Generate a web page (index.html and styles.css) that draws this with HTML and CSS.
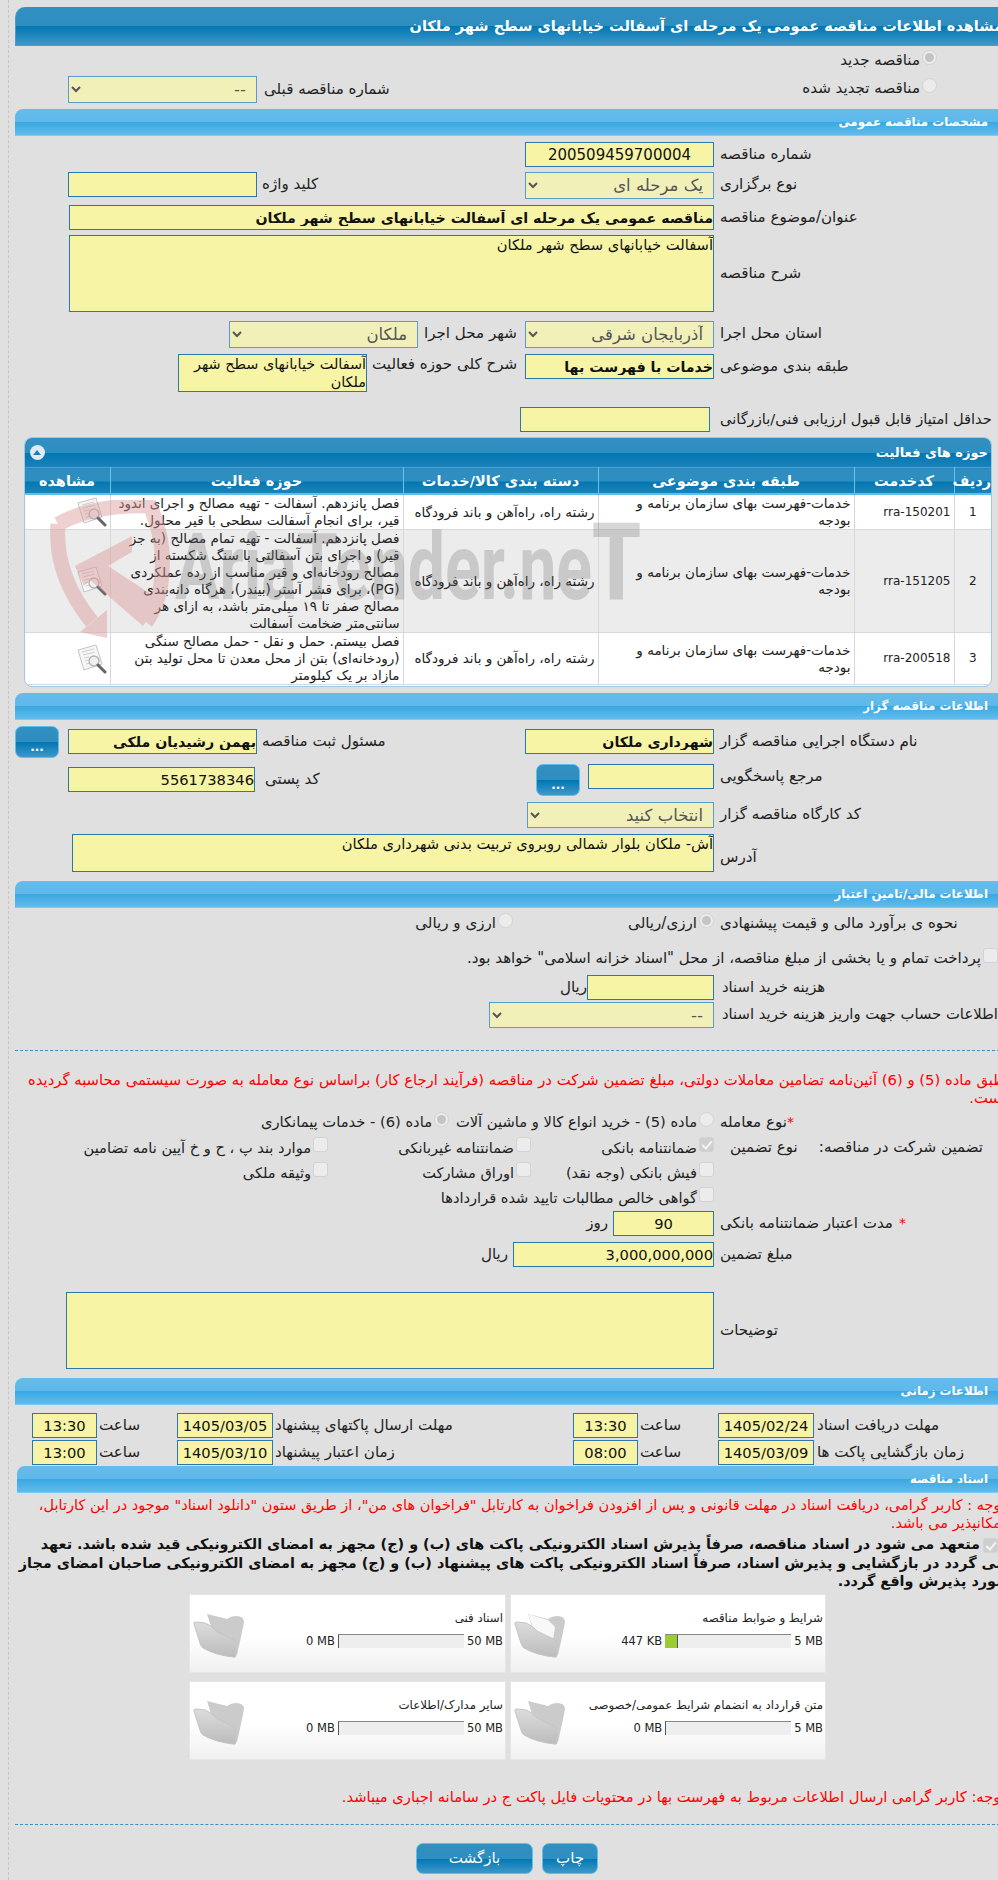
FILE: index.html
```html
<!DOCTYPE html>
<html lang="fa">
<head>
  <meta charset="UTF-8" />
  <title>مشاهده اطلاعات مناقصه</title>
  <link rel="stylesheet" href="styles.css">
</head>
<body>
<svg class="defs" width="0" height="0">
  <defs>
    <linearGradient id="folder-grad" x1="0" y1="0" x2="0" y2="1">
      <stop offset="0" stop-color="#dcdcdc"/>
      <stop offset="1" stop-color="#bcbcbc"/>
    </linearGradient>
  </defs>
  <symbol id="doc-icon" viewBox="0 0 32 30">
    <path d="M2 6 L20 1 L26 20 L8 26 Z" fill="#f6f6f6" stroke="#c4c4c4"/>
    <path d="M6 8 L18 5 M7 11 L19 8 M8 14 L13 13 M9 17 L12 16 M10 20 L15 19" stroke="#cdcdcd" fill="none"/>
    <circle cx="18" cy="17" r="5" fill="#efefef" stroke="#b4b4b4" stroke-width="1.4"/>
    <path d="M22 21 L29 28" stroke="#666" stroke-width="3" stroke-linecap="round"/>
  </symbol>
  <symbol id="folder-icon" viewBox="0 0 52 46">
    <path d="M14 1 L34 6 Q38 3 43 3 Q51 3 51 9 Q49 20 44 42 L20 20 Z" fill="#cbcbcb"/>
    <path d="M1 11 Q0 9 3 9 L12 10 Q18 12 23 18 Q32 23 40 26 Q43 27 43 30 L43 42 Q43 45 40 44 Q22 42 10 35 Q8 34 7 30 Z" fill="url(#folder-grad)" stroke="#c4c4c4"/>
  </symbol>
  <symbol id="folder-open-icon" viewBox="0 0 52 46">
    <path d="M14 1 L34 6 Q38 3 43 3 Q51 3 51 9 Q49 20 44 42 L20 20 Z" fill="#cbcbcb"/>
    <path d="M14 1 L34 7 L41 14 L39 27 L20 18 Z" fill="#f8f8f8"/>
    <path d="M1 11 Q0 9 3 9 L12 10 Q18 12 23 18 Q32 23 40 26 Q43 27 43 30 L43 42 Q43 45 40 44 Q22 42 10 35 Q8 34 7 30 Z" fill="url(#folder-grad)" stroke="#c4c4c4"/>
  </symbol>
</svg>

<div class="shell">
<div class="page">

  <h1 class="title">مشاهده اطلاعات مناقصه عمومی یک مرحله ای آسفالت خیابانهای سطح شهر ملکان</h1>

  <!-- new / renewed -->
  <div class="choice-first"><label class="opt"><input type="radio" class="on" disabled>مناقصه جدید</label></div>
  <div class="choice-second">
    <label class="opt"><input type="radio" disabled>مناقصه تجدید شده</label>
    <div class="prev-tender">
      <span class="lbl-inline">شماره مناقصه قبلی</span>
      <select class="sel w-189" disabled><option>--</option></select>
    </div>
  </div>

  <h2 class="bar">مشخصات مناقصه عمومی</h2>
  <div class="row r-142">
    <span class="lbl">شماره مناقصه</span>
    <input class="in w-189 center number" value="200509459700004" readonly>
  </div>
  <div class="row r-172">
    <span class="lbl">نوع برگزاری</span>
    <select class="sel w-189" disabled><option>یک مرحله ای</option></select>
    <span class="lbl-2">کلید واژه</span>
    <input class="in w-189" readonly>
  </div>
  <div class="row r-205">
    <span class="lbl">عنوان/موضوع مناقصه</span>
    <input class="in w-645 strong" value="مناقصه عمومی یک مرحله ای آسفالت خیابانهای سطح شهر ملکان" readonly>
  </div>
  <div class="row r-235">
    <span class="lbl lbl-mid">شرح مناقصه</span>
    <textarea class="in w-645 h-77" readonly>آسفالت خیابانهای سطح شهر ملکان</textarea>
  </div>
  <div class="row r-321">
    <span class="lbl">استان محل اجرا</span>
    <select class="sel w-189" disabled><option>آذربایجان شرقی</option></select>
    <span class="lbl-3">شهر محل اجرا</span>
    <select class="sel w-189" disabled><option>ملکان</option></select>
  </div>
  <div class="row r-354">
    <span class="lbl">طبقه بندی موضوعی</span>
    <input class="in w-189 strong" value="خدمات با فهرست بها" readonly>
    <span class="lbl-4">شرح کلی حوزه فعالیت</span>
    <textarea class="in w-189 h-38 tight" readonly>آسفالت خیابانهای سطح شهر ملکان</textarea>
  </div>
  <div class="row r-407">
    <span class="lbl lbl-short">حداقل امتیاز قابل قبول ارزیابی فنی/بازرگانی</span>
    <input class="in w-190" readonly>
  </div>

  <!-- activity table -->
  <div class="panel">
    <div class="panel-head">
      <span>حوزه های فعالیت</span>
      <span class="collapse"></span>
    </div>
    <table class="grid">
      <colgroup>
        <col class="c-1"><col class="c-2"><col class="c-3"><col class="c-4"><col class="c-5"><col class="c-6">
      </colgroup>
      <thead>
        <tr><th>ردیف</th><th>کدخدمت</th><th>طبقه بندی موضوعی</th><th>دسته بندی کالا/خدمات</th><th>حوزه فعالیت</th><th>مشاهده</th></tr>
      </thead>
      <tbody>
        <tr class="h-35">
          <td class="num">1</td><td class="code">rra-150201</td>
          <td class="cat">خدمات-فهرست بهای سازمان برنامه و بودجه</td>
          <td>رشته راه، راه‌آهن و باند فرودگاه</td>
          <td>فصل پانزدهم. آسفالت - تهیه مصالح و اجرای اندود قیر، برای انجام آسفالت سطحی با قیر محلول.</td>
          <td class="view"><svg class="doc"><use href="#doc-icon"/></svg></td>
        </tr>
        <tr class="alt">
          <td class="num">2</td><td class="code">rra-151205</td>
          <td class="cat">خدمات-فهرست بهای سازمان برنامه و بودجه</td>
          <td>رشته راه، راه‌آهن و باند فرودگاه</td>
          <td>فصل پانزدهم. آسفالت - تهیه تمام مصالح (به جز قیر) و اجرای بتن آسفالتی با سنگ شکسته از مصالح رودخانه‌ای و قیر مناسب از رده عملکردی (PG)، برای قشر آستر (بیندر)، هرگاه دانه‌بندی مصالح صفر تا ۱۹ میلی‌متر باشد، به ازای هر سانتی‌متر ضخامت آسفالت</td>
          <td class="view"><svg class="doc"><use href="#doc-icon"/></svg></td>
        </tr>
        <tr>
          <td class="num">3</td><td class="code">rra-200518</td>
          <td class="cat">خدمات-فهرست بهای سازمان برنامه و بودجه</td>
          <td>رشته راه، راه‌آهن و باند فرودگاه</td>
          <td>فصل بیستم. حمل و نقل - حمل مصالح سنگی (رودخانه‌ای) بتن از محل معدن تا محل تولید بتن مازاد بر یک کیلومتر</td>
          <td class="view"><svg class="doc"><use href="#doc-icon"/></svg></td>
        </tr>
      </tbody>
    </table>
  </div>

  <!-- watermark sits on top of the table -->
  <div class="watermark">
    <svg class="wm-shield" viewBox="50 500 120 140">
      <path d="M58 524 Q95 504 150 506 Q168 545 160 590 Q154 612 146 622" fill="none" stroke="#d99" stroke-width="15"/>
      <path d="M58 524 Q54 575 92 622" fill="none" stroke="#d99" stroke-width="15"/>
      <path d="M80 632 L107 610 L107 638 Z" fill="#d99"/>
      <path d="M75 566 L132 536 L132 552 L108 566 L160 600 L143 626 L90 580 L84 586 Z" fill="#d99"/>
    </svg>
    <span class="wm-text">AriaTender.ne<b>T</b></span>
  </div>

  <h2 class="bar bar-693">اطلاعات مناقصه گزار</h2>
  <div class="row r-729">
    <span class="lbl">نام دستگاه اجرایی مناقصه گزار</span>
    <input class="in w-189 strong" value="شهرداری ملکان" readonly>
    <span class="lbl-2">مسئول ثبت مناقصه</span>
    <input class="in w-189 strong" value="بهمن رشیدیان ملکی" readonly>
    <button class="btn btn-dots btn-first">...</button>
  </div>
  <div class="row r-764">
    <span class="lbl">مرجع پاسخگویی</span>
    <input class="in w-126" readonly>
    <button class="btn btn-dots btn-second">...</button>
    <span class="lbl-postal">کد پستی</span>
    <input class="in w-187 postal" value="5561738346" readonly>
  </div>
  <div class="row r-802">
    <span class="lbl">کد کارگاه مناقصه گزار</span>
    <select class="sel w-187 h-26" disabled><option>انتخاب کنید</option></select>
  </div>
  <div class="row r-834">
    <span class="lbl lbl-low">آدرس</span>
    <textarea class="in w-642 h-38" readonly>آش- ملکان بلوار شمالی روبروی تربیت بدنی شهرداری ملکان</textarea>
  </div>

  <h2 class="bar bar-881">اطلاعات مالی/تامین اعتبار</h2>
  <div class="row r-923">
    <span class="lbl">نحوه ی برآورد مالی و قیمت پیشنهادی</span>
    <label class="opt w-201"><input type="radio" class="on" disabled>ارزی/ریالی</label>
    <label class="opt"><input type="radio" disabled>ارزی و ریالی</label>
  </div>
  <div class="row r-958">
    <label class="opt check-line"><input type="checkbox" disabled>پرداخت تمام و یا بخشی از مبلغ مناقصه، از محل "اسناد خزانه اسلامی" خواهد بود.</label>
  </div>
  <div class="row r-975">
    <span class="lbl lbl-narrow">هزینه خرید اسناد</span>
    <input class="in w-127" readonly>
    <span class="unit">ریال</span>
  </div>
  <div class="row r-1002">
    <span class="lbl lbl-narrow">اطلاعات حساب جهت واریز هزینه خرید اسناد</span>
    <select class="sel w-225 h-26" disabled><option>--</option></select>
  </div>
  <hr class="dots dots-1050">
  <p class="notice notice-1">طبق ماده (5) و (6) آئین‌نامه تضامین معاملات دولتی، مبلغ تضمین شرکت در مناقصه (فرآیند ارجاع کار) براساس نوع معامله به صورت سیستمی محاسبه گردیده است.</p>

  <div class="row r-1112">
    <span class="lbl"><em class="req">*</em>نوع معامله</span>
    <label class="opt w-265"><input type="radio" disabled>ماده (5) - خرید انواع کالا و ماشین آلات</label>
    <label class="opt"><input type="radio" class="on" disabled>ماده (6) - خدمات پیمانکاری</label>
  </div>
  <div class="guarantee">
    <div class="g-head">
      <span>تضمین شرکت در مناقصه:</span>
      <span>نوع تضمین</span>
    </div>
    <div class="g-grid">
      <label class="opt"><input type="checkbox" class="on" disabled>ضمانتنامه بانکی</label>
      <label class="opt"><input type="checkbox" disabled>ضمانتنامه غیربانکی</label>
      <label class="opt"><input type="checkbox" disabled>موارد بند پ ، ح و خ آیین نامه تضامین</label>
      <label class="opt"><input type="checkbox" disabled>فیش بانکی (وجه نقد)</label>
      <label class="opt"><input type="checkbox" disabled>اوراق مشارکت</label>
      <label class="opt"><input type="checkbox" disabled>وثیقه ملکی</label>
      <label class="opt g-wide"><input type="checkbox" disabled>گواهی خالص مطالبات تایید شده قراردادها</label>
    </div>
  </div>
  <div class="row r-1211">
    <span class="lbl"><em class="req star-gap">*</em>مدت اعتبار ضمانتنامه بانکی</span>
    <input class="in w-101 center" value="90" readonly>
    <span class="unit unit-gap">روز</span>
  </div>
  <div class="row r-1242">
    <span class="lbl">مبلغ تضمین</span>
    <input class="in w-201" value="3,000,000,000" readonly>
    <span class="unit unit-gap">ریال</span>
  </div>
  <div class="row r-1292">
    <span class="lbl lbl-mid">توضیحات</span>
    <textarea class="in w-648 h-77" readonly></textarea>
  </div>

  <h2 class="bar bar-1378">اطلاعات زمانی</h2>
  <div class="times">
    <div class="time-row">
      <span class="t-lbl">مهلت دریافت اسناد</span>
      <input class="in date" value="1405/02/24" readonly>
      <span class="t-hour">ساعت</span>
      <input class="in hour" value="13:30" readonly>
      <span class="t-lbl-2">مهلت ارسال پاکتهای پیشنهاد</span>
      <input class="in date" value="1405/03/05" readonly>
      <span class="t-hour">ساعت</span>
      <input class="in hour" value="13:30" readonly>
    </div>
    <div class="time-row">
      <span class="t-lbl">زمان بازگشایی پاکت ها</span>
      <input class="in date" value="1405/03/09" readonly>
      <span class="t-hour">ساعت</span>
      <input class="in hour" value="08:00" readonly>
      <span class="t-lbl-2">زمان اعتبار پیشنهاد</span>
      <input class="in date" value="1405/03/10" readonly>
      <span class="t-hour">ساعت</span>
      <input class="in hour" value="13:00" readonly>
    </div>
  </div>

  <h2 class="bar bar-docs">اسناد مناقصه</h2>
  <p class="notice notice-2">توجه : کاربر گرامی، دریافت اسناد در مهلت قانونی و پس از افزودن فراخوان به کارتابل "فراخوان های من"، از طریق ستون "دانلود اسناد" موجود در این کارتابل، امکانپذیر می باشد.</p>
  <p class="pledge"><input type="checkbox" class="on" disabled>متعهد می شود در اسناد مناقصه، صرفاً پذیرش اسناد الکترونیکی پاکت های (ب) و (ج) مجهز به امضای الکترونیکی قید شده باشد. تعهد<br>می گردد در بازگشایی و پذیرش اسناد، صرفاً اسناد الکترونیکی پاکت های پیشنهاد (ب) و (ج) مجهز به امضای الکترونیکی صاحبان امضای مجاز<br>مورد پذیرش واقع گردد.</p>

  <div class="cards">
    <div class="card">
      <div class="card-title">شرایط و ضوابط مناقصه</div>
      <div class="meter"><span class="size">5 MB</span><i class="track"><b class="fill"></b></i><span class="size">447 KB</span></div>
      <svg class="folder"><use href="#folder-open-icon"/></svg>
    </div>
    <div class="card">
      <div class="card-title">اسناد فنی</div>
      <div class="meter"><span class="size">50 MB</span><i class="track empty"></i><span class="size">0 MB</span></div>
      <svg class="folder"><use href="#folder-icon"/></svg>
    </div>
    <div class="card">
      <div class="card-title">متن قرارداد به انضمام شرایط عمومی/خصوصی</div>
      <div class="meter"><span class="size">5 MB</span><i class="track empty"></i><span class="size">0 MB</span></div>
      <svg class="folder"><use href="#folder-icon"/></svg>
    </div>
    <div class="card">
      <div class="card-title">سایر مدارک/اطلاعات</div>
      <div class="meter"><span class="size">50 MB</span><i class="track empty"></i><span class="size">0 MB</span></div>
      <svg class="folder"><use href="#folder-icon"/></svg>
    </div>
  </div>

  <p class="notice notice-3">توجه: کاربر گرامی ارسال اطلاعات مربوط به فهرست بها در محتویات فایل پاکت ج در سامانه اجباری میباشد.</p>
  <hr class="dots dots-1823">

  <div class="actions">
    <button class="btn btn-print">چاپ</button>
    <button class="btn btn-back">بازگشت</button>
  </div>

</div>
</div>
</body>
</html>
```
FILE: styles.css
```css
html, body {
  margin: 0;
  height: 1880px;
  overflow: hidden;
  background: #e0e0e0;
}
body {
  font-family: "DejaVu Sans", sans-serif;
  font-size: 15.1px;
  color: #222;
}
.defs { position: absolute; }
.shell {
  margin-left: 8px;
  padding: 7px 0 0 6px;
  height: 1873px;
  width: 1000px;
  border-left: 1px dashed #c6c6c6;
}
.page {
  position: relative;
  width: 990px;
  direction: rtl;
}
/* ---------- bars ---------- */
.title {
  margin: 0;
  height: 39px;
  box-sizing: border-box;
  padding-right: 2px;
  line-height: 38px;
  font-size: 14.5px;
  font-weight: bold;
  color: #fff;
  white-space: nowrap;
  border-top-left-radius: 10px;
  border-left: 1px solid #4a9bd0;
  border-bottom: 1px solid #4a9bd0;
  background: linear-gradient(#3290c1 0, #2e8ebf 50%, #0077b3 51%, #3f98c8 100%);
}
.bar {
  margin: 0;
  height: 27px;
  box-sizing: border-box;
  padding-right: 17px;
  line-height: 26px;
  font-size: 11.8px;
  font-weight: bold;
  color: #fff;
  border-top-left-radius: 8px;
  background: linear-gradient(#66bceb 0, #5eb8ea 50%, #39a8e2 51%, #62bbec 100%);
  border-bottom: 1px solid #7fcaf0;
}
.bar-693 { margin-top: 6px; }
.bar-881 { margin-top: 9px; }
.bar-1378 { margin-top: 9px; }
.bar-docs { margin-top: 1px; width: 988px; }
/* ---------- form rows ---------- */
.row {
  display: flex;
  align-items: flex-start;
}
.lbl, .lbl-2, .lbl-3, .lbl-4, .lbl-postal, .unit {
  flex: none;
  line-height: 24px;
  text-align: left;
  white-space: nowrap;
}
.lbl { width: 285px; margin-left: 6px; }
.lbl-2 { width: 263px; margin-left: 5px; }
.lbl-3 { width: 101px; margin-left: 6px; }
.lbl-4 { width: 153px; margin-left: 5px; line-height: 20px; }
.lbl-narrow { width: 283px; margin-left: 8px; font-size: 14.8px; }
.lbl-short { margin-left: 10px; font-size: 14.6px; }
.lbl-mid { line-height: 77px; }
.lbl-low { padding-top: 11px; }
.unit-gap { margin-right: 5px; }

.in, .sel {
  flex: none;
  box-sizing: border-box;
  margin: 0;
  font: inherit;
  font-size: 14.7px;
  color: #111;
  direction: rtl;
  background: #f7f5a5;
  border: 1px solid #2a78ad;
  border-radius: 0;
  padding: 0;
  height: 25px;
  outline: none;
  resize: none;
  overflow: hidden;
}
.sel {
  height: 27px;
  padding-right: 6px;
  font-size: 16.5px;
  color: #555;
  background-color: #f1f0b9;
  border-color: #5b9bd0;
  opacity: 1;
}
.center { text-align: center; }
.number { font-size: 15px; }
.strong { font-weight: bold; font-size: 14.2px; }
.tight { font-size: 14.4px; line-height: 18px; }
.w-101 { width: 101px; }
.w-126 { width: 126px; }
.w-127 { width: 127px; }
.w-187 { width: 187px; }
.w-189 { width: 189px; }
.w-190 { width: 190px; }
.w-201 { width: 201px; }
.w-225 { width: 225px; }
.w-642 { width: 642px; }
.w-645 { width: 645px; }
.w-648 { width: 648px; }
.h-26 { height: 26px; }
.h-38 { height: 38px; }
.h-77 { height: 77px; }

.r-142 { margin-top: 6px; }
.r-172 { margin-top: 5px; }
.r-205 { margin-top: 6px; }
.r-235 { margin-top: 5px; }
.r-321 { margin-top: 9px; }
.r-354 { margin-top: 6px; }
.r-407 { margin-top: 15px; }
.r-729 { margin-top: 9px; height: 25px; }
.r-764 { margin-top: 10px; height: 28px; }
.r-802 { margin-top: 10px; }
.r-834 { margin-top: 6px; }
.r-923 { margin-top: 3px; }
.r-958 { margin-top: 11px; }
.r-975 { margin-top: 5px; }
.r-1002 { margin-top: 2px; }
.r-1112 { margin-top: 3px; }
.r-1112 .opt { font-size: 14.7px; }
.r-1211 { margin-top: 1px; }
.r-1242 { margin-top: 6px; }
.r-1292 { margin-top: 25px; }

/* ---------- radios and checks ---------- */
.opt {
  display: inline-flex;
  align-items: center;
  line-height: 24px;
  white-space: nowrap;
}
input[type=radio], input[type=checkbox] {
  appearance: none;
  flex: none;
  box-sizing: border-box;
  width: 15px;
  height: 15px;
  margin: 0 0 6px 2px;
  background: #ececec;
  border: 1.5px solid #d3d3d3;
  position: relative;
}
input[type=radio] { border-radius: 50%; }
input[type=checkbox] { border-radius: 3px; }
input[type=radio].on::after {
  content: "";
  position: absolute;
  inset: 2px;
  border-radius: 50%;
  background: #c4c4c4;
}
input[type=checkbox].on { background: #cfcfcf; }
input[type=checkbox].on::after {
  content: "";
  position: absolute;
  left: 4px;
  top: 1px;
  width: 4px;
  height: 8px;
  border: solid #f4f4f4;
  border-width: 0 2px 2px 0;
  transform: rotate(40deg);
}
.choice-first { padding: 2px 68px 0 0; height: 24px; }
.choice-second {
  display: flex;
  align-items: flex-start;
  justify-content: space-between;
  padding: 0 68px 0 0;
  height: 33px;
  margin-top: 4px;
}
.prev-tender {
  display: flex;
  margin-left: 53px;
}
.lbl-inline { line-height: 27px; margin-left: 7px; }

.w-201 { width: 201px; }
.w-265 { width: 265px; }
.check-line { padding-right: 7px; }
.req { color: #f00; font-style: normal; font-size: 14px; line-height: 14px; }
.star-gap { margin-left: 6px; }
.guarantee {
  display: flex;
  margin-top: 1px;
  height: 75px;
}
.g-head {
  flex: none;
  width: 291px;
  display: flex;
  gap: 21px;
  padding-right: 22px;
  box-sizing: border-box;
  line-height: 24px;
}
.g-grid {
  display: grid;
  grid-template-columns: 183px 203px 260px;
  grid-auto-rows: 25px;
  font-size: 14.6px;
}
.g-wide { grid-column: 1 / 4; }

hr.dots {
  margin: 0;
  border: 0;
  border-top: 1px dashed #3c8fc0;
}
hr.dots-1050 { margin-top: 22px; }
hr.dots-1823 { margin-top: 18px; }
.notice {
  margin: 0;
  color: #f00;
  font-size: 14.7px;
  line-height: 18px;
}
.notice-1 { margin-top: 20px; padding-left: 9px; font-size: 14.8px; }
.notice-2 { margin-top: 3px; font-size: 14.5px; }
.notice-3 { margin-top: 28px; }

/* ---------- activity panel ---------- */
.panel {
  width: 968px;
  height: 250px;
  margin: 5px 13px 0 0;
  box-sizing: border-box;
  border: 1px solid #9cc9e6;
  border-radius: 8px;
  overflow: hidden;
  background: #fff;
}
.panel-head {
  display: flex;
  justify-content: space-between;
  align-items: center;
  height: 29px;
  padding: 0 3px 0 5px;
  font-weight: bold;
  font-size: 13px;
  color: #fff;
  background: linear-gradient(#3290c1 0, #2e8ebf 50%, #0077b3 51%, #1b81b8 100%);
}
.collapse {
  width: 15px;
  height: 15px;
  border-radius: 50%;
  background: #dfeaf3;
  position: relative;
}
.collapse::after {
  content: "";
  position: absolute;
  left: 3px;
  top: 5px;
  border: 4.5px solid transparent;
  border-top: 0;
  border-bottom: 5px solid #1d7fb5;
}
.grid {
  width: 967px;
  border-collapse: collapse;
  table-layout: fixed;
}
.c-1 { width: 37px; }
.c-2 { width: 100px; }
.c-3 { width: 256px; }
.c-4 { width: 195px; }
.c-5 { width: 293px; }
.c-6 { width: 86px; }
.grid th {
  height: 25px;
  padding: 0;
  font-size: 14.5px;
  line-height: 20px;
  color: #fff;
  border-top: 1px solid #4aa3d8;
  border-bottom: 2px solid #5ec0ee;
  border-left: 1px solid #6cc0ec;
  background: linear-gradient(#2e8ebf 0, #2e8ebf 50%, #0077b3 51%, #1f83b9 100%);
}
.grid td {
  padding: 0 3px;
  font-size: 13.5px;
  line-height: 17px;
  border-left: 1px solid #d8d8d8;
  border-bottom: 1px solid #d8d8d8;
}
.grid .h-35 { height: 35px; }
.grid .alt td { background: #ececec; }
.grid td.num { text-align: center; font-size: 12px; }
.grid td.code { direction: ltr; text-align: right; font-size: 12px; }
.grid td.cat { padding-left: 34px; }
.grid td.view { padding: 0; }
.doc { display: block; width: 32px; height: 30px; margin-right: 2px; }

/* ---------- watermark ---------- */
.watermark {
  position: absolute;
  left: 35px;
  top: 493px;
  width: 640px;
  height: 150px;
  pointer-events: none;
  direction: ltr;
}
.wm-shield {
  position: absolute;
  left: 0;
  top: 0;
  width: 120px;
  height: 140px;
  opacity: .45;
}
.wm-text {
  position: absolute;
  left: 125px;
  top: 12px;
  font: bold 92px/100px Roboto, sans-serif;
  color: rgba(110, 110, 110, .28);
  white-space: nowrap;
  transform: scaleX(.72);
  transform-origin: left top;
}
.wm-text b { font-size: 108px; }

/* ---------- buttons ---------- */
.btn {
  flex: none;
  padding: 0;
  font: inherit;
  color: #fff;
  border: 1px solid #5cc0ee;
  border-radius: 7px;
  background: linear-gradient(#3290c1 0, #2e8ebf 50%, #0077b3 51%, #3f98c8 100%);
}
.btn-dots {
  width: 44px;
  height: 32px;
  padding-top: 10px;
  font-size: 12px;
  font-weight: bold;
}
.btn-first { margin-top: -3px; margin-right: 9px; }
.btn-second { margin-right: 8px; }
.lbl-postal { width: 66px; padding-left: 10px; margin: 3px 205px 0 0; }
.postal { margin-top: 3px; }
.actions {
  display: flex;
  gap: 9px;
  margin: 18px 407px 0 0;
}
.btn-print { width: 56px; height: 31px; }
.btn-back { width: 117px; height: 31px; }

/* ---------- times ---------- */
.times {
  display: flex;
  flex-direction: column;
  gap: 2px;
  margin-top: 8px;
}
.time-row { display: flex; height: 25px; }
.time-row .in { text-align: center; }
.date { width: 96px; }
.hour { width: 65px; }
.t-lbl, .t-lbl-2, .t-hour { flex: none; line-height: 25px; white-space: nowrap; text-align: left; }
.t-lbl { width: 188px; margin-left: 3px; }
.t-hour { width: 42px; margin: 0 36px 0 2px; }
.t-lbl-2 { width: 298px; margin-left: 2px; }

/* ---------- documents ---------- */
.pledge {
  margin: 3px 0 0;
  font-size: 14.4px;
  font-weight: bold;
  line-height: 18.5px;
  color: #111;
  white-space: nowrap;
}
.pledge input { vertical-align: middle; margin: 0 7px 0 3px; }
.cards {
  display: grid;
  grid-template-columns: 316px 317px;
  gap: 8px 4px;
  margin: 3px 179px 0 0;
}
.card {
  position: relative;
  height: 79px;
  box-sizing: border-box;
  padding: 15px 2px 0 0;
  border: 1px solid #e6e6e6;
  background: linear-gradient(#fff 0, #fff 55%, #f0f0f0 100%);
}
.card-title { font-size: 11.8px; line-height: 16px; white-space: nowrap; }
.meter {
  display: flex;
  align-items: center;
  gap: 3px;
  margin-top: 8px;
  font-size: 11.5px;
  line-height: 14px;
}
.size { direction: ltr; unicode-bidi: isolate; white-space: nowrap; }
.track {
  display: block;
  flex: none;
  width: 126px;
  height: 14px;
  box-sizing: border-box;
  border-top: 1px solid #888;
  background: #eee;
}
.track.empty { border-left: 1px solid #555; }
.fill {
  display: block;
  width: 13px;
  height: 13px;
  margin-right: auto;
  background: #9acd32;
  border-right: 1px solid #555;
  box-sizing: border-box;
}
.folder {
  position: absolute;
  left: 3px;
  top: 18px;
  width: 52px;
  height: 46px;
}
```
